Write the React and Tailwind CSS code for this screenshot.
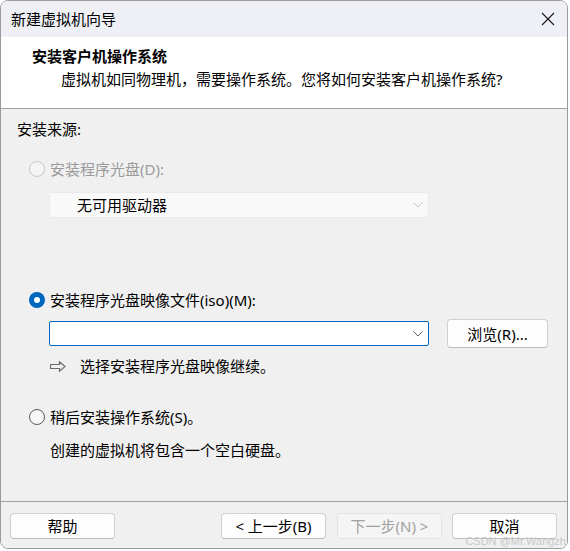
import React from 'react'

const Radio = ({ state }) => {
  if (state === 'checked') {
    return (
      <span className="w-4 h-4 rounded-full bg-[#0067c0] flex items-center justify-center shrink-0">
        <span className="w-[6px] h-[6px] rounded-full bg-white" />
      </span>
    )
  }
  if (state === 'disabled') {
    return <span className="w-4 h-4 rounded-full border border-[#c8c8c8] bg-[#f4f4f4] shrink-0" />
  }
  return <span className="w-4 h-4 rounded-full border border-[#5c5c5c] bg-[#f7f7f7] shrink-0" />
}

const Chevron = ({ color }) => (
  <svg width="10" height="6" viewBox="0 0 10 6" fill="none">
    <path d="M0.5 0.5 L5 5 L9.5 0.5" stroke={color} strokeWidth="1" />
  </svg>
)

const Button = ({ children, disabled, className = '' }) => (
  <div
    className={
      disabled
        ? 'h-[26px] w-[105px] rounded-[4px] border border-[#e3e3e3] bg-[#f5f5f5] text-[#a0a0a0] flex items-center justify-center ' + className
        : 'h-[26px] w-[105px] rounded-[4px] border border-[#d0d0d0] border-b-[#bcbcbc] bg-[#fdfdfd] text-black flex items-center justify-center ' + className
    }
  >
    {children}
  </div>
)

export default function App() {
  return (
    <div className="w-[570px] h-[551px] bg-white relative font-['Noto_Sans','Noto_Sans_CJK_SC',sans-serif] text-[15px] leading-[22px] text-black">
      <div className="w-[568px] h-[549px] border border-[#9a9a9a] rounded-[8px] overflow-hidden flex flex-col">
        {/* title bar */}
        <div className="h-[36px] bg-[#eff0f5] flex items-center justify-between pl-[10px] pr-[12px] shrink-0">
          <span>新建虚拟机向导</span>
          <svg width="14" height="14" viewBox="0 0 14 14" fill="none">
            <path d="M1 1 L13 13 M13 1 L1 13" stroke="#1a1a1a" strokeWidth="1.1" />
          </svg>
        </div>

        {/* header */}
        <div className="h-[72px] bg-white border-b border-[#a0a0a0] pt-[8px] shrink-0">
          <div className="pl-[31px] font-bold">安装客户机操作系统</div>
          <div className="pl-[60px] mt-[1px]">虚拟机如同物理机，需要操作系统。您将如何安装客户机操作系统?</div>
        </div>

        {/* body */}
        <div className="flex-1 bg-[#f0f0f0] pl-[16px] pt-[9px] border-b border-[#a0a0a0]">
          <div>安装来源:</div>

          <div className="mt-[18px] ml-[12px] flex items-center gap-[5px] text-[#9a9a9a]">
            <Radio state="disabled" />
            <span>安装程序光盘(D):</span>
          </div>

          <div className="mt-[12px] ml-[32px] w-[380px] h-[26px] bg-[#f9f9f9] border border-[#ebebeb] rounded-[3px] flex items-center justify-between pl-[27px] pr-[5px]">
            <span>无可用驱动器</span>
            <Chevron color="#c4c4c4" />
          </div>

          <div className="mt-[71px] ml-[12px] flex items-center gap-[5px]">
            <Radio state="checked" />
            <span>安装程序光盘映像文件(iso)(M):</span>
          </div>

          <div className="mt-[8px] ml-[32px] flex items-center">
            <div className="w-[380px] h-[25px] bg-white border border-[#0067c0] rounded-[2px] flex items-center justify-end pr-[5px]">
              <Chevron color="#5a5a5a" />
            </div>
            <div className="ml-[18px] w-[101px] h-[29px] rounded-[4px] border border-[#d0d0d0] border-b-[#bcbcbc] bg-[#fdfdfd] flex items-center justify-center">
              浏览(R)...
            </div>
          </div>

          <div className="mt-[7px] ml-[33px] flex items-center">
            <svg width="16" height="11" viewBox="0 0 16 11" fill="none">
              <path d="M0.5 3.5 H9.5 V0.8 L15 5.5 L9.5 10.2 V7.5 H0.5 Z" stroke="#6b6b6b" strokeWidth="1.2" strokeLinejoin="miter" />
            </svg>
            <span className="ml-[14px]">选择安装程序光盘映像继续。</span>
          </div>

          <div className="mt-[29px] ml-[12px] flex items-center gap-[5px]">
            <Radio state="unchecked" />
            <span>稍后安装操作系统(S)。</span>
          </div>

          <div className="mt-[11px] ml-[33px]">创建的虚拟机将包含一个空白硬盘。</div>
        </div>

        {/* footer */}
        <div className="h-[46px] bg-[#f0f0f0] flex items-start pt-[11px] pl-[9px] pr-[10px] shrink-0">
          <Button>帮助</Button>
          <div className="flex-1" />
          <Button>&lt; 上一步(B)</Button>
          <Button disabled className="ml-[11px]">下一步(N) &gt;</Button>
          <Button className="ml-[10px]">取消</Button>
        </div>
      </div>

      <div className="absolute right-[4px] bottom-[4px] text-[11px] leading-[12px] text-[#c8c8c8] font-['Liberation_Sans',sans-serif]">
        CSDN @Mr.Wangzh
      </div>
    </div>
  )
}
